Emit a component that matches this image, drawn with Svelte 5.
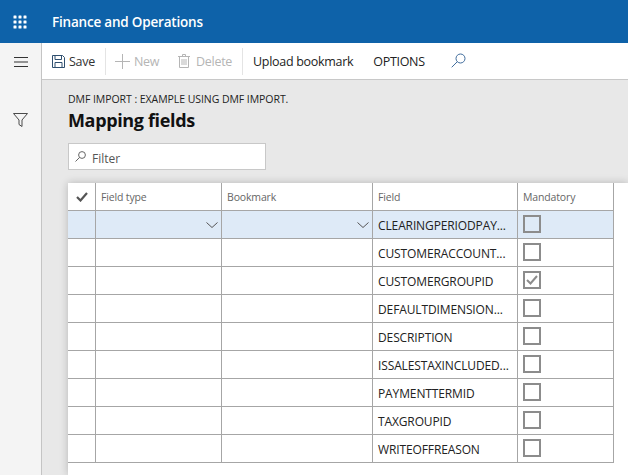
<script>
  const rows = [
    { field: 'CLEARINGPERIODPAY...', selected: true },
    { field: 'CUSTOMERACCOUNT...' },
    { field: 'CUSTOMERGROUPID', checked: true },
    { field: 'DEFAULTDIMENSION...' },
    { field: 'DESCRIPTION' },
    { field: 'ISSALESTAXINCLUDED...' },
    { field: 'PAYMENTTERMID' },
    { field: 'TAXGROUPID' },
    { field: 'WRITEOFFREASON' }
  ];
</script>

<div class="shell">
  <header class="topbar">
    <svg class="waffle" width="14" height="14" viewBox="0 0 14 14" fill="#fff">
      {#each [0.5, 5.5, 10.5] as y}
        {#each [0.5, 5.5, 10.5] as x}
          <rect {x} {y} width="3" height="3" rx="0.5" />
        {/each}
      {/each}
    </svg>
    <span class="brand">Finance and Operations</span>
  </header>

  <div class="body">
    <aside class="rail">
      <svg width="14" height="10" viewBox="0 0 14 10" stroke="#333" stroke-width="1" fill="none">
        <path d="M0 .5h14M0 5h14M0 9.5h14" />
      </svg>
      <svg class="funnel" width="15" height="14" viewBox="0 0 15 14" stroke="#4a4a4a" stroke-width="1" fill="none">
        <path d="M.5 .5h14L9 7v6.500l-3-2V7z" />
      </svg>
    </aside>

    <main class="main">
      <nav class="toolbar">
        <button class="tool">
          <svg width="13" height="13" viewBox="0 0 13 13" fill="none" stroke="#2f4f6f" stroke-width="1">
            <path d="M.5.500h10l2 2v10H.5z" /><path d="M3 .500v4h6.500v-4M3 12.500v-5h7v5" />
          </svg>
          Save
        </button>
        <span class="sep"></span>
        <button class="tool off">
          <svg width="15" height="15" viewBox="0 0 15 15" stroke="#b5b5b5" stroke-width="1" fill="none">
            <path d="M7.500 0v15M0 7.500h15" />
          </svg>
          New
        </button>
        <button class="tool off del">
          <svg width="12" height="14" viewBox="0 0 12 14" stroke="#b5b5b5" stroke-width="1" fill="none">
            <path d="M0 2.500h12M4.500 2.500V.500h3v2M1.500 2.500v11h9v-11M4 5v6M6 5v6M8 5v6" />
          </svg>
          Delete
        </button>
        <span class="sep"></span>
        <button class="tool text">Upload bookmark</button>
        <button class="tool text opts">OPTIONS</button>
        <svg class="search" width="15" height="15" viewBox="0 0 15 15" fill="none" stroke="#3f6c9c" stroke-width="1">
          <circle cx="9.500" cy="5.500" r="4.500" /><path d="M6.300 8.700L.7 14.300" />
        </svg>
      </nav>

      <section class="content">
        <div class="crumb">DMF IMPORT : EXAMPLE USING DMF IMPORT.</div>
        <h1>Mapping fields</h1>
        <div class="filter">
          <svg width="11" height="11" viewBox="0 0 11 11" fill="none" stroke="#666" stroke-width="1">
            <circle cx="7" cy="4" r="3.400" /><path d="M4.600 6.400L.5 10.500" />
          </svg>
          <span class="filter-label">Filter</span>
        </div>

        <div class="panel">
          <div class="grid">
            <div class="row head">
              <div class="c c0">
                <svg width="12" height="10" viewBox="0 0 12 10" fill="none" stroke="#555" stroke-width="2.200">
                  <path d="M1 5l3.500 3.500L11 1" />
                </svg>
              </div>
              <div class="c c1">Field type</div>
              <div class="c c2">Bookmark</div>
              <div class="c c3">Field</div>
              <div class="c c4">Mandatory</div>
            </div>
            {#each rows as row}
              <div class="row" class:selected={row.selected}>
                <div class="c c0"></div>
                <div class="c c1">
                  {#if row.selected}
                    <svg class="chev" width="12" height="6" viewBox="0 0 12 6" fill="none" stroke="#555" stroke-width="1">
                      <path d="M.5 .5L6 5.500 11.500 .5" />
                    </svg>
                  {/if}
                </div>
                <div class="c c2">
                  {#if row.selected}
                    <svg class="chev" width="12" height="6" viewBox="0 0 12 6" fill="none" stroke="#555" stroke-width="1">
                      <path d="M.5 .5L6 5.500 11.500 .5" />
                    </svg>
                  {/if}
                </div>
                <div class="c c3"><span class="val">{row.field}</span></div>
                <div class="c c4">
                  <span class="box">
                    {#if row.checked}
                      <svg width="12" height="10" viewBox="0 0 12 10" fill="none" stroke="#8c8c8c" stroke-width="2">
                        <path d="M1 5l3.500 3.500L11 1" />
                      </svg>
                    {/if}
                  </span>
                </div>
              </div>
            {/each}
          </div>
        </div>
      </section>
    </main>
  </div>
</div>

<style>
  :global(body) {
    margin: 0;
    overflow: hidden;
  }

  .shell {
    width: 628px;
    height: 475px;
    display: flex;
    flex-direction: column;
    overflow: hidden;
    font-family: "Open Sans", "Noto Sans", sans-serif;
    color: #222;
  }

  .topbar {
    height: 43px;
    flex: none;
    background: #0e62a9;
    display: flex;
    align-items: center;
    padding-left: 13px;
  }

  .brand {
    margin-left: 25px;
    color: #fff;
    font-size: 13.500px;
    font-weight: 600;
    letter-spacing: -0.2px;
  }

  .body {
    flex: 1;
    display: flex;
    min-height: 0;
  }

  .rail {
    width: 41px;
    flex: none;
    background: #f4f4f4;
    border-right: 1px solid #c4c4c4;
    display: flex;
    flex-direction: column;
    align-items: center;
    padding-top: 14px;
    box-sizing: content-box;
  }

  .funnel {
    margin-top: 46px;
  }

  .main {
    flex: 1;
    min-width: 0;
    display: flex;
    flex-direction: column;
    background: #e8e8e8;
  }

  .toolbar {
    height: 36px;
    flex: none;
    background: #fff;
    border-bottom: 1px solid #c8c8c8;
    display: flex;
    align-items: center;
    padding-left: 10px;
  }

  .tool {
    all: unset;
    display: flex;
    align-items: center;
    gap: 4px;
    font-size: 12.500px;
    letter-spacing: -0.3px;
    color: #333;
  }

  .tool.off {
    color: #b5b5b5;
    margin-left: 9px;
    gap: 4px;
  }

  .tool.del {
    margin-left: 19px;
    gap: 6px;
  }

  .tool.text {
    margin-left: 10px;
    color: #222;
  }

  .tool.opts {
    margin-left: 20px;
  }

  .sep {
    width: 1px;
    height: 27px;
    background: #e4e4e4;
    margin-left: 10px;
  }

  .search {
    margin-left: 26px;
    margin-top: -1px;
  }

  .content {
    flex: 1;
    min-height: 0;
    padding: 13px 0 0 26px;
    display: flex;
    flex-direction: column;
  }

  .crumb {
    font-size: 10.500px;
    line-height: 13px;
    letter-spacing: -0.06px;
    color: #222;
  }

  h1 {
    margin: 2px 0 1px;
    font-size: 18px;
    line-height: 24px;
    font-weight: 700;
    letter-spacing: -0.35px;
    color: #111;
  }

  .filter {
    margin-top: 10px;
    width: 190px;
    height: 25px;
    background: #fff;
    border: 1px solid #c8c8c8;
    display: flex;
    align-items: center;
    padding-left: 6px;
    gap: 6px;
    font-size: 12px;
    color: #555;
    flex: none;
  }

  .filter-label {
    margin-top: 3px;
  }

  .panel {
    margin-top: 13px;
    flex: 1;
    background: #fff;
    box-shadow: 0 0 8px rgba(0, 0, 0, 0.22);
  }

  .row {
    display: flex;
    height: 28px;
    border-bottom: 1px solid #a6a6a6;
    box-sizing: border-box;
    width: 546px;
  }

  .row.head {
    height: 28px;
    color: #666;
    font-size: 10.500px;
    letter-spacing: -0.15px;
  }

  .row.selected {
    background: #deeaf7;
  }

  .c {
    position: relative;
    box-sizing: border-box;
    height: 100%;
    border-right: 1px solid #a6a6a6;
    display: flex;
    align-items: center;
    padding-left: 5px;
    overflow: hidden;
  }

  .c0 {
    width: 28px;
    padding-left: 8px;
  }

  .c1 {
    width: 126px;
  }

  .c2 {
    width: 151px;
  }

  .c3 {
    width: 145px;
  }

  .c4 {
    width: 96px;
  }

  .chev {
    position: absolute;
    right: 3px;
    top: 11px;
  }

  .val {
    margin-top: 2px;
    font-size: 12px;
    letter-spacing: -0.12px;
    color: #222;
    white-space: nowrap;
  }

  .box {
    width: 18px;
    height: 18px;
    box-sizing: border-box;
    border: 2px solid #8c8c8c;
    display: flex;
    align-items: center;
    justify-content: center;
    align-self: flex-start;
    margin-top: 4px;
  }
</style>
